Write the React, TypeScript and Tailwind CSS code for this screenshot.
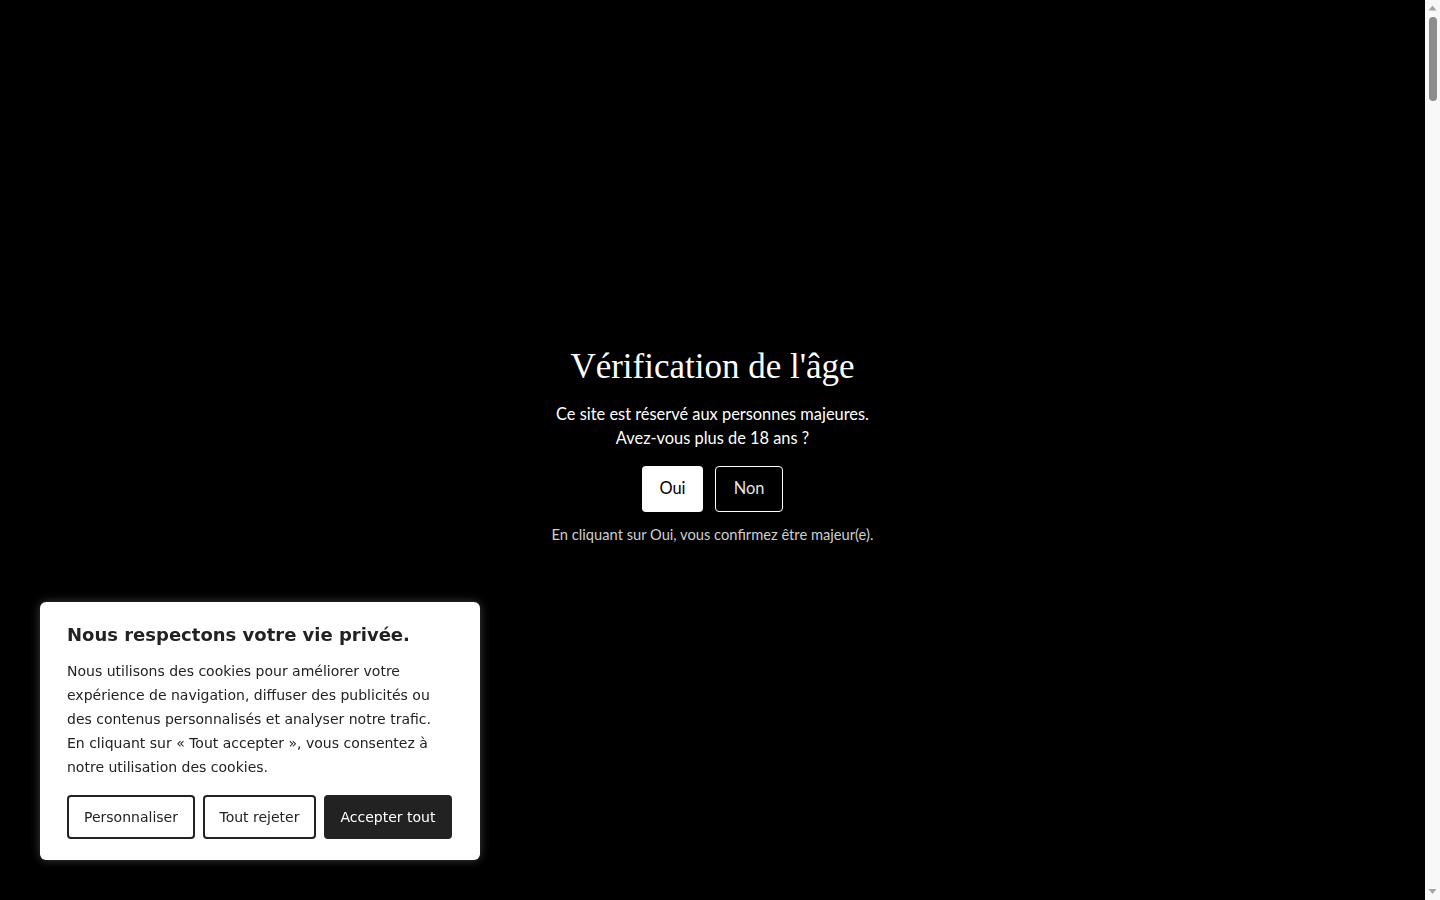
import React from 'react';

const AgeGate: React.FC = () => (
  <div className="flex flex-1 items-center justify-center bg-black pb-[12px]">
    <div className="flex flex-col items-center text-center text-white font-['Lato',sans-serif]">
      <h1 className="font-['Liberation_Serif',serif] text-[35px] leading-[44px] font-normal">
        Vérification de l'âge
      </h1>
      <p className="mt-[13px] text-[16.4px] leading-[24px]">
        Ce site est réservé aux personnes majeures.
        <br />
        Avez-vous plus de 18 ans ?
      </p>
      <div className="mt-[16px] flex gap-3">
        <button className="h-[46px] w-[61px] rounded bg-white text-[16.4px] text-black">Oui</button>
        <button className="h-[46px] w-[68px] rounded border border-white bg-black text-[16.4px] text-[#e5e5e5]">
          Non
        </button>
      </div>
      <p className="mt-[12px] text-[14.7px] leading-[20px] text-[#cfcfcf]">
        En cliquant sur Oui, vous confirmez être majeur(e).
      </p>
    </div>
  </div>
);

const CookieBanner: React.FC = () => (
  <div className="fixed bottom-10 left-10 w-[440px] rounded-md bg-white px-[27px] pt-[20px] pb-[21px] text-[#222] shadow-[0_0_10px_rgba(255,255,255,0.25)] font-['DejaVu_Sans',sans-serif]">
    <h2 className="text-[18px] leading-[26px] font-bold">Nous respectons votre vie privée.</h2>
    <p className="mt-[11px] text-[14px] leading-[24px]">
      Nous utilisons des cookies pour améliorer votre expérience de navigation, diffuser des publicités ou
      des contenus personnalisés et analyser notre trafic. En cliquant sur « Tout accepter », vous consentez à
      notre utilisation des cookies.
    </p>
    <div className="mt-[16px] flex gap-2">
      <button className="h-[44px] shrink-0 whitespace-nowrap rounded-sm border-2 border-[#222] bg-white px-[15px] text-[14px] text-[#222]">
        Personnaliser
      </button>
      <button className="h-[44px] shrink-0 whitespace-nowrap rounded-sm border-2 border-[#222] bg-white px-[14.5px] text-[14px] text-[#222]">
        Tout rejeter
      </button>
      <button className="h-[44px] shrink-0 whitespace-nowrap rounded-sm border-2 border-[#222] bg-[#222] px-[14.5px] text-[14px] text-white">
        Accepter tout
      </button>
    </div>
  </div>
);

// fake browser scrollbar, the page behind the gate is long
const Scrollbar: React.FC = () => (
  <div className="flex w-[15px] flex-col items-center bg-[#f8f8f8]">
    <svg width="15" height="17" viewBox="0 0 15 17" className="shrink-0">
      <path d="M3.5 10.5 L7.5 5.5 L11.5 10.5 Z" fill="#a3a3a3" />
    </svg>
    <div className="h-[84px] w-[8px] rounded-full bg-[#8c8c8c]" />
    <div className="flex-1" />
    <svg width="15" height="17" viewBox="0 0 15 17" className="shrink-0">
      <path d="M3.5 6 L7.5 11 L11.5 6 Z" fill="#a3a3a3" />
    </svg>
  </div>
);

export default function App() {
  return (
    <div className="flex h-[900px] bg-black">
      <AgeGate />
      <Scrollbar />
      <CookieBanner />
    </div>
  );
}
